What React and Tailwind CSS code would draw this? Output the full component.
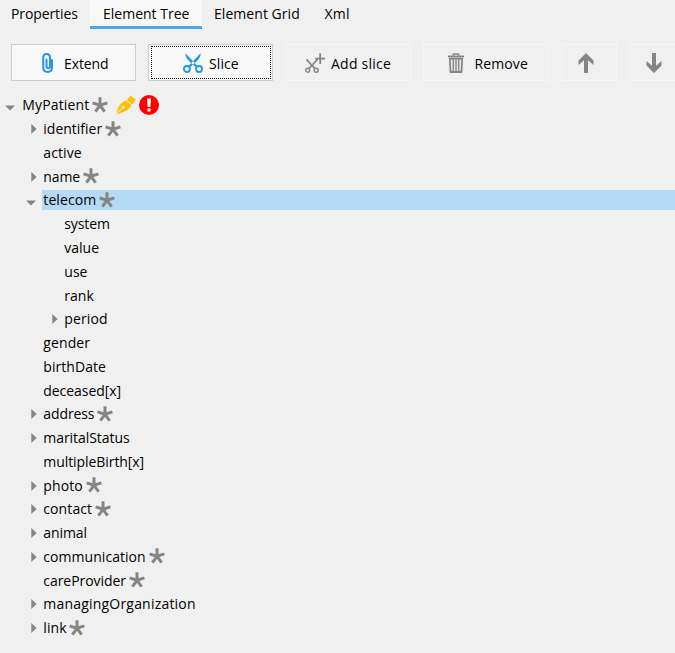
import React from "react";

const tree = [
  { label: "MyPatient", depth: 0, arrow: "down", star: true, badges: true, w: "w-[69px]", track: "tracking-[0.15px]" },
  { label: "identifier", depth: 1, arrow: "right", star: true, w: "w-[61px]", track: "tracking-[0px]" },
  { label: "active", depth: 1, track: "tracking-[0.1px]" },
  { label: "name", depth: 1, arrow: "right", star: true, w: "w-[39px]", track: "tracking-[-0.1px]" },
  { label: "telecom", depth: 1, arrow: "down", star: true, selected: true, w: "w-[55px]", track: "tracking-[0.1px]" },
  { label: "system", depth: 2, track: "tracking-[-0.1px]" },
  { label: "value", depth: 2, track: "tracking-[0px]" },
  { label: "use", depth: 2, track: "tracking-[0px]" },
  { label: "rank", depth: 2, track: "tracking-[0px]" },
  { label: "period", depth: 2, arrow: "right", track: "tracking-[0.1px]" },
  { label: "gender", depth: 1, track: "tracking-[0.1px]" },
  { label: "birthDate", depth: 1, track: "tracking-[0.05px]" },
  { label: "deceased[x]", depth: 1, track: "tracking-[-0.05px]" },
  { label: "address", depth: 1, arrow: "right", star: true, w: "w-[53px]", track: "tracking-[-0.1px]" },
  { label: "maritalStatus", depth: 1, arrow: "right", track: "tracking-[-0.05px]" },
  { label: "multipleBirth[x]", depth: 1, track: "tracking-[-0.07px]" },
  { label: "photo", depth: 1, arrow: "right", star: true, w: "w-[42px]", track: "tracking-[0.1px]" },
  { label: "contact", depth: 1, arrow: "right", star: true, w: "w-[51px]", track: "tracking-[0.1px]" },
  { label: "animal", depth: 1, arrow: "right", track: "tracking-[-0.1px]" },
  { label: "communication", depth: 1, arrow: "right", star: true, w: "w-[105px]", track: "tracking-[0.05px]" },
  { label: "careProvider", depth: 1, star: true, w: "w-[85px]", track: "tracking-[-0.05px]" },
  { label: "managingOrganization", depth: 1, arrow: "right", track: "tracking-[0.2px]" },
  { label: "link", depth: 1, arrow: "right", star: true, w: "w-[25px]", track: "tracking-[0.1px]" },
];

const gutters = ["w-[21px]", "w-[42px]", "w-[63px]"];

function Star() {
  return (
    <svg className="mb-px ml-[0.5px] h-4 w-4 shrink-0" viewBox="0 0 16 16" fill="none" stroke="#858585" strokeWidth="3">
      <path d="M8 8.3V0.2M8 8.3L0.6 5.9M8 8.3L15.4 5.9M8 8.3L3.4 14.7M8 8.3L12.6 14.7" />
    </svg>
  );
}

function Arrow({ dir }) {
  return dir === "down" ? (
    <svg className="mt-[5px] mr-[6px] h-[6px] w-[10px]" viewBox="0 0 10 6" fill="#858585">
      <path d="M0 0.5H10L5 5.5Z" />
    </svg>
  ) : (
    <svg className="mr-[5px] h-[10px] w-[6px]" viewBox="0 0 6 10" fill="#858585">
      <path d="M0.3 0L5.6 5L0.3 10Z" />
    </svg>
  );
}

function Pen() {
  return (
    <svg className="ml-2 h-5 w-5 shrink-0" viewBox="0 0 20 20">
      <path d="M14.6 0.4L19.8 4.6L16.2 9.4L10.8 5Z" fill="#ffc000" />
      <path d="M10 5.6L15.6 10.2C13.4 14.2 9 17 0.9 19.4L0.6 19L7.3 12.9L6.6 12.2L0.2 18.2C1.8 12.2 4.4 7.6 10 5.6Z" fill="#ffc000" />
      <circle cx="7.6" cy="12.1" r="1.3" fill="#f0f0f0" />
    </svg>
  );
}

function Alert() {
  return (
    <svg className="ml-[3px] h-5 w-5 shrink-0" viewBox="0 0 20 20">
      <circle cx="10" cy="10" r="10" fill="#ff0000" />
      <path d="M8 3.5H12L11.3 12H8.7Z" fill="#fff" />
      <circle cx="10" cy="15" r="1.8" fill="#fff" />
    </svg>
  );
}

function Row({ item }) {
  return (
    <li className="flex h-[23.77px] items-center">
      <span className={"flex h-full shrink-0 items-center justify-end " + gutters[item.depth]}>
        {item.arrow && <Arrow dir={item.arrow} />}
      </span>
      <div className={"flex h-5 flex-1 items-center pl-[1.3px] " + (item.selected ? "bg-[#b5daf3]" : "")}>
        <span className={"shrink-0 whitespace-nowrap " + item.track + " " + (item.w || "")}>{item.label}</span>
        {item.star && <Star />}
        {item.badges && <Pen />}
        {item.badges && <Alert />}
      </div>
    </li>
  );
}

function Clip() {
  return (
    <svg className="h-5 w-3" viewBox="0 0 12 20" fill="none" stroke="#2196ea" strokeWidth="2" strokeLinecap="round">
      <path d="M10 7V14.3C10 17.2 8.2 19 5.6 19S1.2 17.2 1.2 14.3V5C1.2 2.5 2.6 1 4.6 1S8 2.5 8 5V13.3C8 14.7 7.3 15.3 6.2 15.3S4.5 14.7 4.5 13.3V6.5" />
    </svg>
  );
}

function Scissors() {
  return (
    <svg className="h-5 w-5" viewBox="0 0 20 20" fill="none" stroke="#2196ea" strokeWidth="1.8">
      <path d="M2.4 0.3L15 13.4L13.2 14.4L8.4 10.2C4.8 7 2.2 4.4 2.4 0.3ZM17.6 0.3L5 13.4L6.8 14.4L11.6 10.2C15.2 7 17.8 4.4 17.6 0.3Z" fill="#2196ea" stroke="none" />
      <circle cx="3.9" cy="16" r="3" />
      <circle cx="16.1" cy="16" r="3" />
    </svg>
  );
}

function AddSliceIcon() {
  return (
    <svg className="h-5 w-5" viewBox="0 0 20 20" fill="none" stroke="#858585">
      <path d="M15.2 0.3V11M10 5.6H20" strokeWidth="1.8" />
      <path d="M1.4 6.4L10 15.8M12.5 6.4L3.9 15.8" strokeWidth="1.7" />
      <circle cx="2.7" cy="17.2" r="2" strokeWidth="1.4" />
      <circle cx="11.2" cy="17.2" r="2" strokeWidth="1.4" />
    </svg>
  );
}

function Trash() {
  return (
    <svg className="h-5 w-4" viewBox="0 0 16 20" fill="none" stroke="#858585">
      <path d="M0 3.5H16" strokeWidth="2" />
      <path d="M5.3 2.5V0.9H10.7V2.5" strokeWidth="1.5" />
      <path d="M1.8 5.9H14.2L13.5 19H2.5Z" strokeWidth="1.8" />
      <path d="M5.3 7V18M8 7V18M10.7 7V18" strokeWidth="1.5" />
    </svg>
  );
}

function MoveArrow({ down }) {
  return (
    <svg className={"h-5 w-4 " + (down ? "rotate-180" : "")} viewBox="0 0 16 20" fill="#858585">
      <path d="M8 0L15.5 7.5V12L10 7.2V20H6V7.2L0.5 12V7.5Z" />
    </svg>
  );
}

export default function App() {
  return (
    <main className="flex h-[653px] w-[675px] flex-col overflow-hidden bg-[#f0f0f0] font-['Open_Sans','Noto_Sans',sans-serif] text-[14px] leading-5 tracking-[-0.1px] text-black">
      <nav className="flex h-[29px] shrink-0 whitespace-nowrap">
        <div className="w-[90px] pt-1 pl-[11px]">Properties</div>
        <div className="w-28 border-b-[3px] border-[#4ba8ee] bg-[#f8f8f8] pt-1 pl-[13px] tracking-[0px]">Element Tree</div>
        <div className="w-[110px] pt-1 pl-3 tracking-[0.05px]">Element Grid</div>
        <div className="pt-1 pl-[12.5px] tracking-[0.2px]">Xml</div>
      </nav>
      <div className="mt-[15px] ml-[11px] flex h-[37px] shrink-0 whitespace-nowrap">
        <button className="mr-3 flex w-[125px] shrink-0 items-center border border-[#cccccc] bg-[#f8f8f8] pl-[30px]">
          <Clip />
          <span className="ml-[10px] pt-0.5">Extend</span>
        </button>
        <button className="mr-[13px] flex w-[125px] shrink-0 border border-[#cccccc] bg-[#f8f8f8] p-px pl-0.5">
          <span className="flex h-full w-full items-center border border-dotted border-black pl-[31px]">
            <Scissors />
            <span className="ml-[6px] pt-0.5 tracking-[0.1px]">Slice</span>
          </span>
        </button>
        <button className="mr-3 flex w-[125px] shrink-0 items-center border border-[#f7f7f7] pl-[18px]">
          <AddSliceIcon />
          <span className="ml-[6px] pt-0.5 tracking-[0.25px]">Add slice</span>
        </button>
        <button className="mr-[13px] flex w-[125px] shrink-0 items-center border border-[#f7f7f7] pl-6">
          <Trash />
          <span className="ml-[10.5px] pt-0.5 tracking-[0.1px]">Remove</span>
        </button>
        <button className="mr-[13px] flex w-14 shrink-0 items-center border border-[#f7f7f7] pl-4">
          <MoveArrow />
        </button>
        <button className="flex w-14 shrink-0 items-center border border-[#f7f7f7] pl-[15px]">
          <MoveArrow down />
        </button>
      </div>
      <ul className="mt-[12.5px]">
        {tree.map((item) => (
          <Row key={item.label} item={item} />
        ))}
      </ul>
    </main>
  );
}
